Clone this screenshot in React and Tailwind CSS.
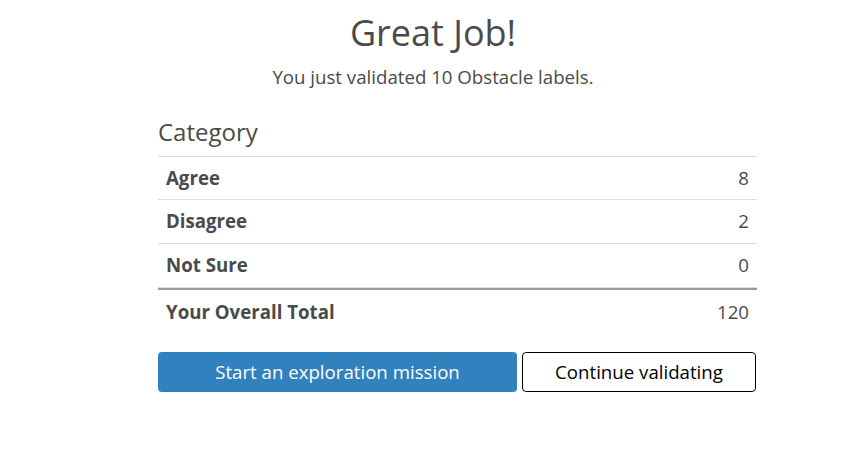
const rows = [
    { label: "Agree", value: 8 },
    { label: "Disagree", value: 2 },
    { label: "Not Sure", value: 0 },
];

function App() {
    return (
        <div className="min-h-[456px] bg-white font-['Open_Sans',sans-serif] text-[#4a4a4a]">
            <div className="ml-[108px] w-[650px] pt-[13px]">
                <div className="text-center">
                    <h1 className="text-[36px] leading-[1.1]">Great Job!</h1>
                    <p className="mt-[12px] text-[18.67px] leading-[24px]">
                        You just validated 10 Obstacle labels.
                    </p>
                </div>

                <div className="ml-[50px] w-[599px] mt-[28px]">
                    <h2 className="text-[24px] leading-[30px] pb-[9px]">Category</h2>

                    <div className="border-t border-[#dddddd]">
                        {rows.map((row, i) => (
                            <div
                                key={row.label}
                                className={`flex items-center justify-between ${i === 0 ? "h-[43px]" : "h-[44px]"} px-[8px] border-b border-[#dddddd] text-[18.67px]`}
                            >
                                <span className="font-bold">{row.label}</span>
                                <span>{row.value}</span>
                            </div>
                        ))}
                        <div className="border-t-2 border-[#999999]" />
                        <div className="flex items-center justify-between h-[44px] px-[8px] text-[18.67px]">
                            <span className="font-bold">Your Overall Total</span>
                            <span>120</span>
                        </div>
                    </div>

                    <div className="flex gap-[5px] mt-[18px]">
                        <button className="w-[359px] h-[40px] rounded-[4px] bg-[#3181bf] text-white text-[18.67px]">
                            Start an exploration mission
                        </button>
                        <button className="w-[234px] h-[40px] rounded-[4px] border border-black bg-white text-black text-[18.67px]">
                            Continue validating
                        </button>
                    </div>
                </div>
            </div>
        </div>
    );
}

export default App;
